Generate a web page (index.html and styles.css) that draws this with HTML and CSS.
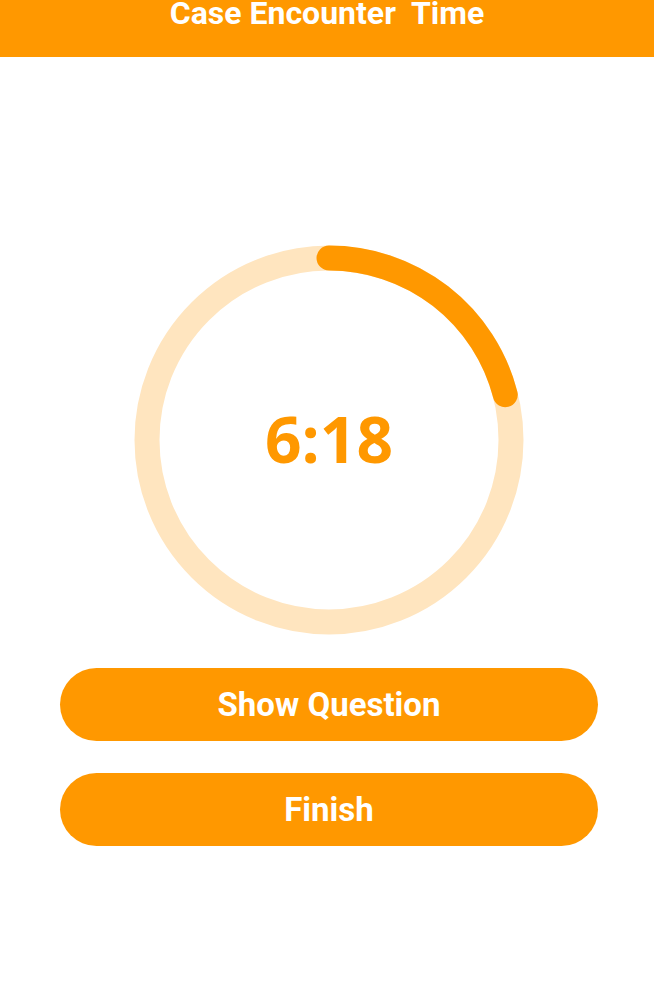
FILE: index.html
```html
<!DOCTYPE html>
<html>
<head>
<meta charset="utf-8">
<link rel="stylesheet" href="styles.css">
</head>
<body>
<header class="appbar">
  <h1 class="title">Case Encounter&nbsp; Time</h1>
</header>
<main class="content">
  <div class="timer">
    <svg class="ring" width="390" height="390" viewBox="0 0 390 390">
      <circle cx="195" cy="195" r="182" fill="none" stroke="#FFE5BF" stroke-width="25"/>
      <circle cx="195" cy="195" r="182" fill="none" stroke="#FF9800" stroke-width="25"
        stroke-linecap="round" stroke-dasharray="240 2000" transform="rotate(-90 195 195)"/>
    </svg>
    <div class="time">6:18</div>
  </div>
  <div class="actions">
    <button class="btn">Show Question</button>
    <button class="btn">Finish</button>
  </div>
</main>
</body>
</html>
```
FILE: styles.css
```css
html, body {
  margin: 0;
  padding: 0;
  background: #ffffff;
}
body {
  font-family: Roboto, "Liberation Sans", sans-serif;
}
.appbar {
  height: 57px;
  background: #FF9800;
  display: flex;
  justify-content: center;
  align-items: flex-start;
  overflow: hidden;
}
.title {
  margin: -3px 0 0 0;
  color: #ffffff;
  font-family: Roboto, sans-serif;
  font-weight: 700;
  font-size: 32px;
  line-height: 32px;
}
.content {
  display: flex;
  flex-direction: column;
  align-items: center;
}
.timer {
  margin-top: 188px;
  width: 390px;
  height: 390px;
  display: grid;
  place-items: center;
  margin-left: 4px;
}
.ring, .time {
  grid-area: 1 / 1;
}
.time {
  color: #FF9800;
  font-family: "Open Sans", "Noto Sans", sans-serif;
  font-weight: 700;
  font-size: 64px;
  line-height: 1;
  margin-top: -2px;
}
.actions {
  margin-top: 33px;
  width: 538px;
  margin-left: 4px;
  display: flex;
  flex-direction: column;
  gap: 32px;
}
.btn {
  height: 73px;
  border: none;
  border-radius: 37px;
  background: #FF9800;
  color: #ffffff;
  font-family: Roboto, sans-serif;
  font-weight: 700;
  font-size: 33px;
  padding: 0;
}
```
